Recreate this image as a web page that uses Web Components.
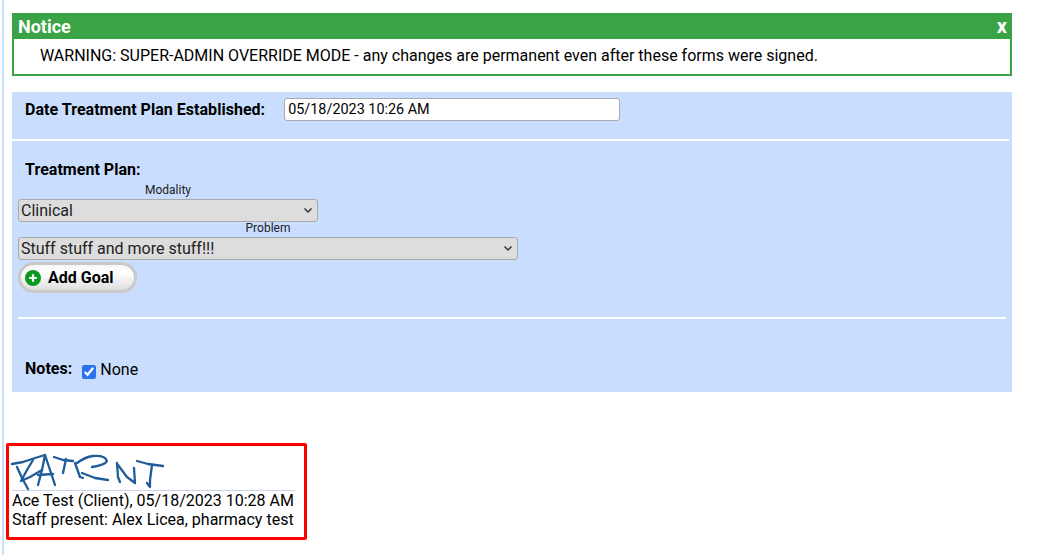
<!DOCTYPE html>
<html>
<head>
<meta charset="utf-8">
<title>Treatment Plan</title>
<style>
    html, body { margin: 0; padding: 0; background: #fff; }
    body { font-family: Roboto, sans-serif; font-size: 16px; color: #000; height: 555px; overflow: hidden; }
</style>
</head>
<body>
<page-shell>
    <notice-box heading="Notice">WARNING: SUPER-ADMIN OVERRIDE MODE - any changes are permanent even after these forms were signed.</notice-box>
    <plan-form></plan-form>
    <signature-box>
        <div>Ace Test (Client), 05/18/2023 10:28 AM</div>
        <div>Staff present: Alex Licea, pharmacy test</div>
    </signature-box>
</page-shell>

<script>
class PageShell extends HTMLElement {
    constructor() {
        super()
        this.attachShadow({ mode: 'open' }).innerHTML = `
            <style>
                :host { display: block; height: 555px; box-sizing: border-box; margin-left: 2px; border-left: 2px solid #c9defe; padding: 13px 0 0 8px; width: 1010px; }
            </style>
            <slot></slot>
        `
    }
}

class NoticeBox extends HTMLElement {
    constructor() {
        super()
        const heading = this.getAttribute('heading')
        this.attachShadow({ mode: 'open' }).innerHTML = `
            <style>
                :host { display: block; width: 1000px; margin-bottom: 16px; }
                .head { display: flex; justify-content: space-between; align-items: center; height: 26px; background: #3aa346; color: #fff; font-weight: 700; font-size: 18px; padding: 0 5px 0 6px; }
                .close { font-size: 20px; }
                .body { box-sizing: border-box; height: 37px; border: 2px solid #3aa346; border-top: 0; padding: 7px 0 0 26px; line-height: 19px; font-size: 16px; }
            </style>
            <div class="head"><span>${heading}</span><span class="close">x</span></div>
            <div class="body"><slot></slot></div>
        `
    }
}

class GoalButton extends HTMLElement {
    constructor() {
        super()
        this.attachShadow({ mode: 'open' }).innerHTML = `
            <style>
                :host { display: inline-block; }
                button { display: flex; align-items: center; gap: 7px; box-sizing: border-box; width: 119px; height: 31px; padding: 0 0 0 4px; border: 3px solid #c9c9c9; border-radius: 16px; background: linear-gradient(#f6f6f6, #fff 30%, #dedede); font: 700 16px Roboto, sans-serif; color: #000; }
                svg { width: 16px; height: 16px; display: block; }
            </style>
            <button type="button">
                <svg viewBox="0 0 16 16"><circle cx="8" cy="8" r="8" fill="#0a9a1e"/><path d="M8 4.200v7.600M4.200 8h7.600" stroke="#fff" stroke-width="2.200"/></svg>
                <span><slot></slot></span>
            </button>
        `
    }
}

class PickList extends HTMLElement {
    constructor() {
        super()
        this.attachShadow({ mode: 'open' }).innerHTML = `
            <style>
                :host { display: flex; flex-direction: column; align-items: center; }
                span { font-size: 12px; line-height: 14px; margin-bottom: 2px; color: #222; }
                .wrap { position: relative; width: 100%; height: 23px; }
                select { appearance: none; box-sizing: border-box; width: 100%; height: 23px; margin: 0; padding: 0 0 0 2px; border: 1px solid #aaa; border-radius: 3px; background-color: #ddd; font: 16px Roboto, sans-serif; color: #222; }
                svg { position: absolute; right: 5px; top: 8px; width: 10px; height: 7px; pointer-events: none; }
            </style>
            <span>${this.getAttribute('label')}</span>
            <div class="wrap">
                <select><option>${this.getAttribute('value')}</option></select>
                <svg viewBox="0 0 10 7" fill="none" stroke="#333" stroke-width="1.5"><path d="M1.500 1.500L5 5L8.500 1.500"/></svg>
            </div>
        `
    }
}

class PlanForm extends HTMLElement {
    constructor() {
        super()
        this.attachShadow({ mode: 'open' }).innerHTML = `
            <style>
                :host { display: block; box-sizing: border-box; width: 1000px; height: 300px; background: #c9defe; font-size: 16px; }
                hr { height: 2px; border: 0; background: #fff; margin: 0; }
                b { font-weight: 700; letter-spacing: .03px; }
                .date { display: flex; align-items: center; gap: 19px; box-sizing: border-box; height: 47px; padding: 0 0 12px 13px; }
                .date input { box-sizing: border-box; width: 336px; height: 23px; margin: 0; padding: 0 3px; border: 1px solid #aaa; border-radius: 3px; background: #fff; font: 14.4px Roboto, sans-serif; color: #000; }
                .rule-a { width: 997px; }
                .plan { padding: 19px 0 0 6px; height: 176px; box-sizing: border-box; }
                .title { padding-left: 7px; line-height: 19px; }
                .modality { width: 300px; margin-top: 4px; }
                .problem { width: 500px; margin-top: -1px; }
                goal-button { margin-top: 2px; display: block; }
                .rule-b { width: 988px; margin-left: 6px; }
                .notes { display: flex; align-items: center; gap: 10px; padding: 40px 0 0 13px; line-height: 19px; }
                .notes label { display: flex; align-items: center; gap: 4px; position: relative; top: 1px; }
                .notes input { width: 14px; height: 14px; margin: 4px 0 0 0; accent-color: #2a72f0; }
            </style>
            <div class="date">
                <b>Date Treatment Plan Established:</b>
                <input type="text" value="05/18/2023 10:26 AM">
            </div>
            <hr class="rule-a">
            <div class="plan">
                <div class="title"><b>Treatment Plan:</b></div>
                <pick-list class="modality" label="Modality" value="Clinical"></pick-list>
                <pick-list class="problem" label="Problem" value="Stuff stuff and more stuff!!!"></pick-list>
                <goal-button>Add Goal</goal-button>
            </div>
            <hr class="rule-b">
            <div class="notes">
                <b>Notes:</b>
                <label><input type="checkbox" checked>None</label>
            </div>
        `
    }
}

class SignatureBox extends HTMLElement {
    constructor() {
        super()
        this.attachShadow({ mode: 'open' }).innerHTML = `
            <style>
                :host { display: block; box-sizing: border-box; width: 301px; height: 97px; margin: 51px 0 0 -6px; padding: 9px 0 0 3px; border: 3px solid #f00; border-radius: 2px; font-size: 16px; line-height: 19px; }
                .ink { display: block; width: 283px; height: 35px; border-bottom: 1px solid #c8d4ec; }
                svg { display: block; overflow: visible; }
            </style>
            <div class="ink">
                <svg width="283" height="35" viewBox="12 455 283 35" fill="none" stroke="#1f5c9a" stroke-width="2.300" stroke-linecap="round" stroke-linejoin="round">
                    <path d="M12 464L23 462L35 458L45 455"/>
                    <path d="M17 467L22 478L28 489"/>
                    <path d="M33 460L27 470L21 481L30 477L42 470"/>
                    <path d="M38 485L42 470L45 455L50 470L55 485"/>
                    <path d="M38 475L53 474"/>
                    <path d="M54 457L63 460L73 461"/>
                    <path d="M66 459L63 473"/>
                    <path d="M75 463L80 477L83 478"/>
                    <path d="M77 463Q85 457 93 456Q105 455 107 461Q105 465 92 467"/>
                    <path d="M82 473L95 478L108 480"/>
                    <path d="M117 463L118 477L120 482"/>
                    <path d="M118 465L127 477L135 483L134 468"/>
                    <path d="M137 461L148 464L163 466"/>
                    <path d="M152 465L150 480L150 487L147 483"/>
                </svg>
            </div>
            <slot></slot>
        `
    }
}

customElements.define('page-shell', PageShell)
customElements.define('notice-box', NoticeBox)
customElements.define('goal-button', GoalButton)
customElements.define('pick-list', PickList)
customElements.define('plan-form', PlanForm)
customElements.define('signature-box', SignatureBox)
</script>
</body>
</html>
